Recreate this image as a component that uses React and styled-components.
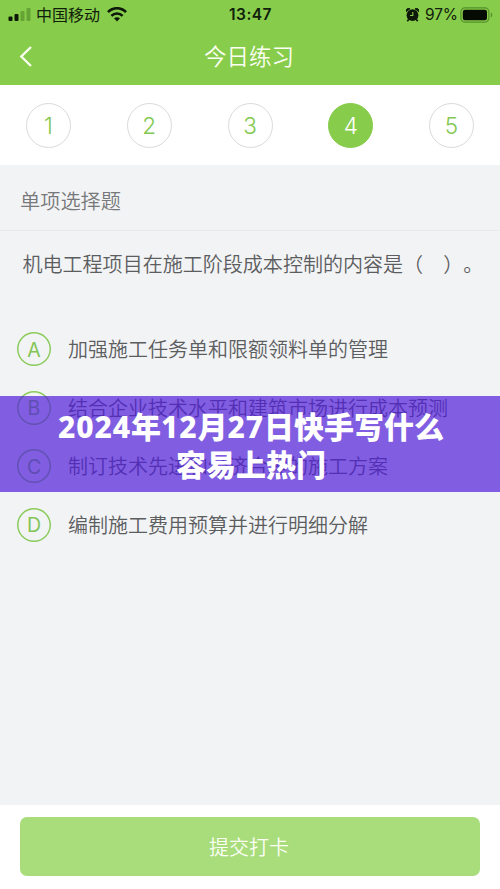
import React from 'react';
import styled, { createGlobalStyle } from 'styled-components';

const GlobalStyle = createGlobalStyle`
  * { box-sizing: border-box; }
  body { margin: 0; }
`;

const GREEN = '#87cc4b';

const Screen = styled.div`
  position: relative;
  display: flex;
  flex-direction: column;
  width: 500px;
  height: 889px;
  overflow: hidden;
  background: #f2f3f5;
  color: #5c5d5f;
  font-family: 'Noto Sans CJK SC', sans-serif;
  font-weight: 350;
  text-spacing-trim: space-all;
`;

const Header = styled.header`
  height: 85px;
  flex: none;
  background: ${GREEN};
`;

const StatusBar = styled.div`
  display: grid;
  grid-template-columns: 1fr auto 1fr;
  align-items: center;
  height: 28px;
  padding: 0 7px 0 8px;
  color: #10200a;
`;

const StatusGroup = styled.div`
  display: flex;
  align-items: center;
  justify-content: ${(p) => (p.$end ? 'flex-end' : 'flex-start')};
`;

const Carrier = styled.span`
  margin: -2px 7px 0 5px;
  font-size: 16px;
  line-height: 28px;
  font-weight: 400;
`;

const Clock = styled.span`
  padding-top: 1px;
  font: 600 15.5px/28px Inter, sans-serif;
  letter-spacing: 0.45px;
`;

const Percent = styled.span`
  margin: 1px 2px 0 6px;
  font: 400 15.5px/28px Inter, sans-serif;
  letter-spacing: -0.1px;
`;

const NavBar = styled.div`
  display: grid;
  grid-template-columns: 60px 1fr 60px;
  align-items: center;
  height: 56px;
  color: #fbfff2;
`;

const BackButton = styled.button`
  display: flex;
  padding: 0 0 0 19px;
  border: 0;
  background: none;
  color: inherit;
`;

const Title = styled.h1`
  margin: 0;
  padding: 0 2px 3px 0;
  font-size: 22.5px;
  line-height: 32px;
  font-weight: 350;
  text-align: center;
`;

const Steps = styled.nav`
  display: flex;
  flex: none;
  justify-content: space-between;
  height: 80px;
  padding: 18px 26px 0;
  background: #fff;
`;

const Step = styled.button`
  display: flex;
  align-items: center;
  justify-content: center;
  width: 45px;
  height: 45px;
  padding: 1px 0 0;
  border: 1px solid ${(p) => (p.$active ? GREEN : '#dadada')};
  border-radius: 50%;
  background: ${(p) => (p.$active ? GREEN : '#fff')};
  color: ${(p) => (p.$active ? '#fff' : '#83c850')};
  font: 350 22.5px/1 Inter, sans-serif;
`;

const SectionTitle = styled.h2`
  flex: none;
  height: 66px;
  margin: 0;
  padding-left: 20px;
  border-bottom: 1px solid #e9eaec;
  color: #77787a;
  font-size: 20.2px;
  line-height: 71px;
  font-weight: 350;
`;

const Question = styled.p`
  margin: 0;
  padding: 17px 0 0 22.5px;
  font-size: 20.05px;
  line-height: 32px;
  white-space: pre;
`;

const Options = styled.div`
  display: flex;
  flex: 1;
  flex-direction: column;
  padding: 40px 17px 0;
`;

const Option = styled.div`
  display: flex;
  align-items: center;
  height: 58.6px;
  font-size: 20px;
  white-space: nowrap;
`;

const OptionText = styled.span`
  padding-bottom: 1px;
`;

const Letter = styled.span`
  display: flex;
  flex: none;
  align-items: center;
  justify-content: center;
  width: 34px;
  height: 34px;
  margin-right: 17px;
  padding-top: 2px;
  border-radius: 50%;
  box-shadow: inset 0 0 0 1.5px #8bcb5b;
  color: #83c457;
  font: 400 19.5px/1 Inter, sans-serif;
`;

const Footer = styled.footer`
  flex: none;
  height: 84px;
  padding: 12px 20px;
  background: #fff;
`;

const SubmitButton = styled.button`
  width: 100%;
  height: 59px;
  padding: 0 2px 0 0;
  border: 0;
  border-radius: 7px;
  background: #a9dc7a;
  color: #fbfff5;
  font: 350 20px/59px 'Noto Sans CJK SC', sans-serif;
`;

const Banner = styled.div`
  position: absolute;
  top: 396px;
  left: 0;
  width: 100%;
  height: 96px;
  padding: 10px 0 0 2px;
  background: rgba(80, 29, 217, 0.7);
  color: #fff;
  font-size: 30px;
  line-height: 38px;
  font-weight: 900;
  text-align: center;
`;

const BannerLine = styled.div`
  height: 38px;
  white-space: nowrap;
`;

const Digits = styled.span`
  font-family: 'Noto Sans', sans-serif;
  font-weight: 800;
  letter-spacing: 0.9px;
`;

const SignalIcon = () => (
  <svg width="23" height="14" viewBox="0 0 23 14">
    <rect x="0.5" y="8.5" width="4" height="4.5" rx="1" fill="#0d1808" />
    <rect x="6.5" y="6" width="4" height="7" rx="1" fill="#0d1808" />
    <rect x="12.5" y="3" width="4" height="10" rx="1" fill="#64a334" />
    <rect x="18.5" y="0" width="4" height="13" rx="1" fill="#64a334" />
  </svg>
);

const WifiIcon = () => (
  <svg width="20" height="15" viewBox="0 0 20 15" fill="none" stroke="#0d1808" strokeWidth="2.6">
    <path d="M1 5.2C6-.1 14-.1 19 5.2" />
    <path d="M4.4 8.8C7.5 5.7 12.5 5.7 15.6 8.8" />
    <path d="M7 11.3C8.8 9.8 11.2 9.8 13 11.3L10 14.6Z" fill="#0d1808" stroke="none" />
  </svg>
);

const AlarmIcon = () => (
  <svg width="13" height="14" viewBox="0 0 13 14">
    <path d="M.3 3.6A2.5 2.5 0 0 1 4 .7ZM12.7 3.6A2.5 2.5 0 0 0 9 .7Z" fill="#0d1808" stroke="#0d1808" />
    <circle cx="6.5" cy="7.2" r="5.9" fill="#0d1808" />
    <path d="M2.8 11.2 1.3 13.3M10.2 11.2l1.5 2.1" stroke="#0d1808" strokeWidth="1.6" />
    <path d="M6.8 4v3.5H4" fill="none" stroke={GREEN} strokeWidth="1.1" />
  </svg>
);

const BatteryIcon = () => (
  <svg width="33" height="16" viewBox="0 0 33 16">
    <rect x="0.9" y="0.9" width="28" height="14.2" rx="4" fill="none" stroke="#568f2c" strokeWidth="1.2" />
    <rect x="2.8" y="2.7" width="24.2" height="10.6" rx="2.2" fill="#050a03" />
    <path d="M30.8 5.5q1.5.6 1.5 2.5t-1.5 2.5Z" fill="#568f2c" />
  </svg>
);

const BackIcon = () => (
  <svg width="14" height="21" viewBox="0 0 14 21" fill="none" stroke="currentColor" strokeWidth="2.3">
    <path d="M12 1 2.3 10.5 12 20" />
  </svg>
);

const options = [
  ['A', '加强施工任务单和限额领料单的管理'],
  ['B', '结合企业技术水平和建筑市场进行成本预测'],
  ['C', '制订技术先进和经济合理的施工方案'],
  ['D', '编制施工费用预算并进行明细分解'],
];

export default function App() {
  return (
    <>
      <GlobalStyle />
      <Screen>
        <Header>
          <StatusBar>
            <StatusGroup>
              <SignalIcon />
              <Carrier>中国移动</Carrier>
              <WifiIcon />
            </StatusGroup>
            <Clock>13:47</Clock>
            <StatusGroup $end>
              <AlarmIcon />
              <Percent>97%</Percent>
              <BatteryIcon />
            </StatusGroup>
          </StatusBar>
          <NavBar>
            <BackButton aria-label="返回"><BackIcon /></BackButton>
            <Title>今日练习</Title>
          </NavBar>
        </Header>
        <Steps>
          {[1, 2, 3, 4, 5].map((n) => (
            <Step key={n} $active={n === 4}>{n}</Step>
          ))}
        </Steps>
        <SectionTitle>单项选择题</SectionTitle>
        <Question>机电工程项目在施工阶段成本控制的内容是（　）。</Question>
        <Options>
          {options.map(([letter, text]) => (
            <Option key={letter}>
              <Letter>{letter}</Letter>
              <OptionText>{text}</OptionText>
            </Option>
          ))}
        </Options>
        <Footer>
          <SubmitButton>提交打卡</SubmitButton>
        </Footer>
        <Banner>
          <BannerLine>
            <Digits>2024</Digits>年<Digits>12</Digits>月<Digits>27</Digits>日快手写什么
          </BannerLine>
          <BannerLine>容易上热门</BannerLine>
        </Banner>
      </Screen>
    </>
  );
}
